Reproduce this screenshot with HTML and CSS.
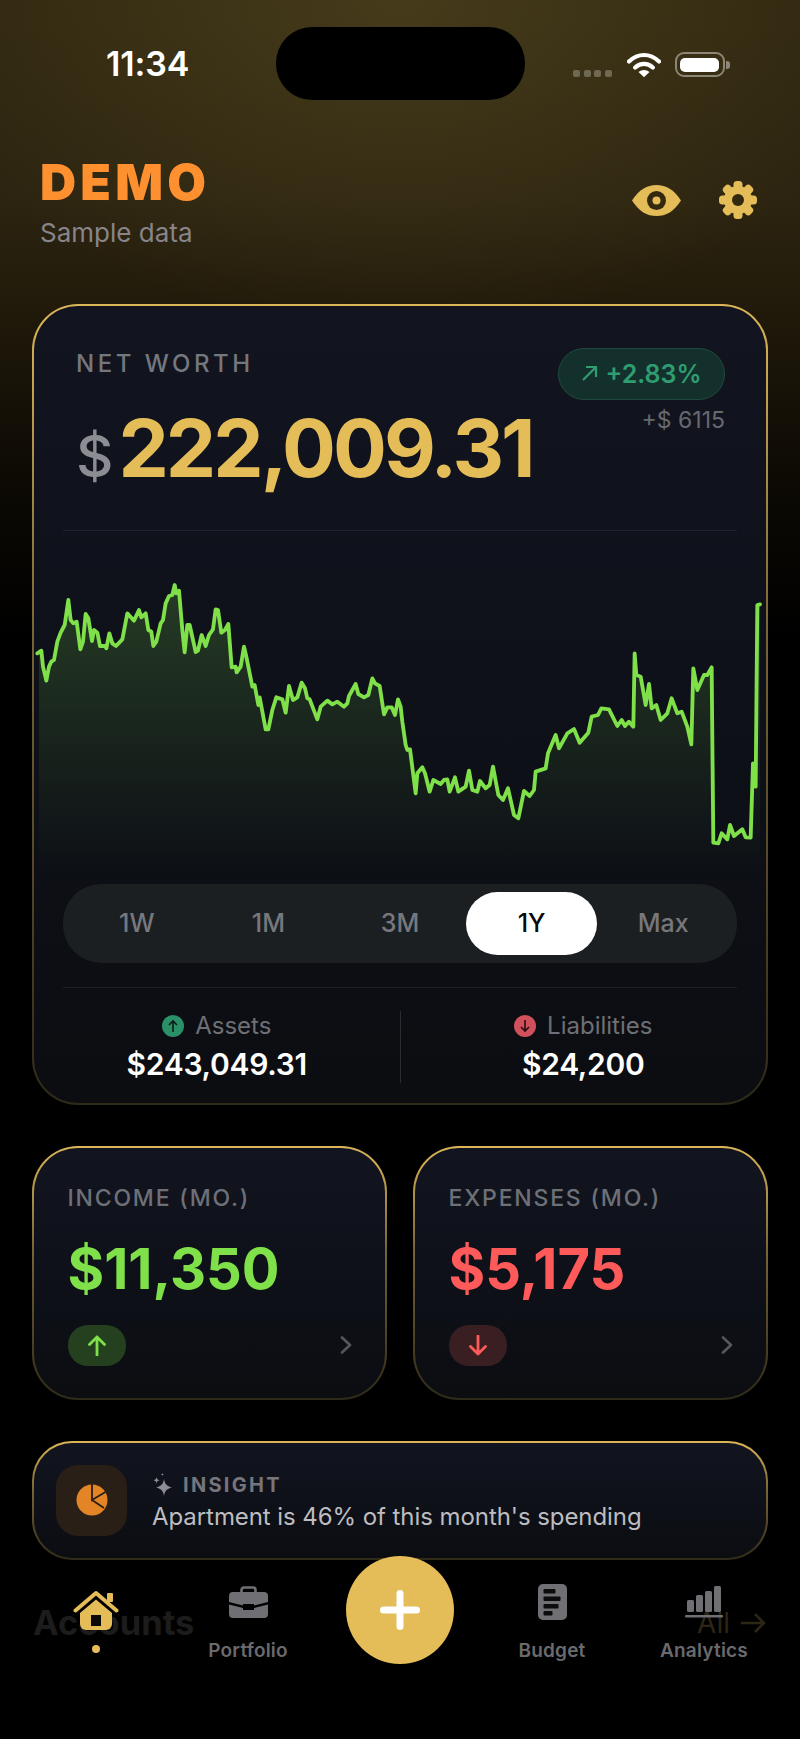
FILE: index.html
```html
<!DOCTYPE html>
<html lang="en">
<head>
<meta charset="utf-8">
<title>Demo</title>
<link rel="stylesheet" href="styles.css">
</head>
<body>
<div class="screen">
  <div class="status">
    <div class="time">11:34</div>
    <div class="island"></div>
    <div class="sys">
      <div class="dots"><i></i><i></i><i></i><i></i></div>
      <svg class="wifi" width="34" height="25" viewBox="0 0 34 25"><path d="M2 9.5C11 .8 23 .8 32 9.5M8.2 15.5c5.200-4.800 12.400-4.800 17.600 0" fill="none" stroke="#fff" stroke-width="4.200" stroke-linecap="round"/><path d="M11.500 20c3.200-2.800 7.800-2.800 11 0L17 25.200z" fill="#fff"/></svg>
      <div class="battery"><span></span></div>
      <div class="nub"></div>
    </div>
  </div>

  <header class="head">
    <div>
      <div class="brand">DEMO</div>
      <div class="sub">Sample data</div>
    </div>
    <div class="head-icons">
      <svg width="49" height="31" viewBox="0 0 49 31"><path d="M0 15.500C7 4.500 15 0 24.500 0S42 4.500 49 15.500C42 26.500 34 31 24.500 31S7 26.500 0 15.500z" fill="#e4bc58"/><circle cx="24.500" cy="15.500" r="9.500" fill="#33290f"/><circle cx="24.500" cy="15.500" r="4" fill="#e4bc58"/></svg>
      <svg width="38" height="38" viewBox="-19 -19 38 38"><g fill="#e4bc58"><circle r="14"/><rect x="-4.500" y="-19" width="9" height="38" rx="3.500"/><rect x="-4.500" y="-19" width="9" height="38" rx="3.500" transform="rotate(45)"/><rect x="-4.500" y="-19" width="9" height="38" rx="3.500" transform="rotate(90)"/><rect x="-4.500" y="-19" width="9" height="38" rx="3.500" transform="rotate(135)"/></g><circle r="6" fill="#33290f"/></svg>
    </div>
  </header>

  <section class="card worth">
    <div class="worth-top">
      <div>
        <div class="label-lg">NET WORTH</div>
        <div class="amount"><span class="cur">$</span><span class="big">222,009.31</span></div>
      </div>
      <div class="change">
        <div class="pill"><svg width="17" height="17" viewBox="0 0 17 17"><path d="M2 15L15 2M5 2h10v10" fill="none" stroke="#2f9d70" stroke-width="2.200"/></svg><span>+2.83%</span></div>
        <div class="delta">+$ 6115</div>
      </div>
    </div>
    <div class="rule"></div>
    <svg class="chart" width="731" height="342" viewBox="35 531 731 342">
      <defs>
        <linearGradient id="area" x1="0" y1="0" x2="0" y2="1">
          <stop offset="0" stop-color="#7fe04a" stop-opacity=".2"/>
          <stop offset=".45" stop-color="#7fe04a" stop-opacity=".11"/>
          <stop offset="1" stop-color="#7fe04a" stop-opacity="0"/>
        </linearGradient>
      </defs>
      <g transform="translate(20 560) scale(.33333)">
        <path fill="url(#area)" d="M60 285L67 272 72 320 82 362 90 320 97 305 105 300 115 245 125 218 137 195 148 120 155 180 163 190 173 185 184 268 192 245 200 162 208 175 219 243 225 210 235 218 243 258 258 258 262 265 271 220 280 250 291 258 310 238 325 160 345 182 360 150 367 172 380 160 388 210 397 215 403 258 412 245 425 190 432 180 440 130 450 108 460 105 467 75 472 100 480 92 490 210 497 277 505 195 512 195 530 276 537 272 548 225 560 258 570 225 582 208 590 148 597 150 607 218 618 210 628 192 638 322 650 320 653 337 665 320 675 260 682 290 700 380 707 375 718 435 722 412 740 508 748 508 760 450 772 412 790 418 800 458 810 378 822 420 835 412 848 368 858 385 865 415 872 418 895 478 905 440 925 422 940 433 955 425 975 440 985 430 990 408 1010 372 1018 402 1035 412 1048 405 1060 355 1068 370 1082 378 1095 463 1105 442 1118 442 1128 465 1137 418 1145 440 1150 485 1160 555 1165 570 1173 568 1190 700 1195 640 1210 622 1218 640 1232 695 1243 660 1265 672 1275 660 1285 658 1292 695 1308 652 1318 695 1340 680 1350 632 1360 690 1375 695 1383 663 1400 685 1412 675 1422 620 1438 705 1452 720 1467 685 1485 765 1498 775 1515 693 1532 708 1545 690 1550 635 1580 625 1587 580 1610 525 1620 565 1645 520 1665 507 1682 548 1708 518 1718 470 1737 465 1747 445 1770 448 1795 498 1808 480 1818 498 1830 485 1843 500 1847 280 1852 345 1865 350 1880 435 1890 372 1898 445 1912 435 1925 480 1945 460 1958 415 1975 460 1988 455 2005 500 2017 553 2023 325 2035 390 2055 345 2065 345 2078 322 2083 848 2098 850 2108 820 2125 838 2133 795 2145 828 2170 808 2180 832 2195 833 2202 610 2210 680 2215 135 2223 133V939H60z"/>
        <path fill="none" stroke="#7fe04a" stroke-width="11.500" stroke-linejoin="round" stroke-linecap="round" d="M55 280L67 272 72 320 82 362 90 320 97 305 105 300 115 245 125 218 137 195 148 120 155 180 163 190 173 185 184 268 192 245 200 162 208 175 219 243 225 210 235 218 243 258 258 258 262 265 271 220 280 250 291 258 310 238 325 160 345 182 360 150 367 172 380 160 388 210 397 215 403 258 412 245 425 190 432 180 440 130 450 108 460 105 467 75 472 100 480 92 490 210 497 277 505 195 512 195 530 276 537 272 548 225 560 258 570 225 582 208 590 148 597 150 607 218 618 210 628 192 638 322 650 320 653 337 665 320 675 260 682 290 700 380 707 375 718 435 722 412 740 508 748 508 760 450 772 412 790 418 800 458 810 378 822 420 835 412 848 368 858 385 865 415 872 418 895 478 905 440 925 422 940 433 955 425 975 440 985 430 990 408 1010 372 1018 402 1035 412 1048 405 1060 355 1068 370 1082 378 1095 463 1105 442 1118 442 1128 465 1137 418 1145 440 1150 485 1160 555 1165 570 1173 568 1190 700 1195 640 1210 622 1218 640 1232 695 1243 660 1265 672 1275 660 1285 658 1292 695 1308 652 1318 695 1340 680 1350 632 1360 690 1375 695 1383 663 1400 685 1412 675 1422 620 1438 705 1452 720 1467 685 1485 765 1498 775 1515 693 1532 708 1545 690 1550 635 1580 625 1587 580 1610 525 1620 565 1645 520 1665 507 1682 548 1708 518 1718 470 1737 465 1747 445 1770 448 1795 498 1808 480 1818 498 1830 485 1843 500 1847 280 1852 345 1865 350 1880 435 1890 372 1898 445 1912 435 1925 480 1945 460 1958 415 1975 460 1988 455 2005 500 2017 553 2023 325 2035 390 2055 345 2065 345 2078 322 2083 848 2098 850 2108 820 2125 838 2133 795 2145 828 2170 808 2180 832 2195 833 2202 610 2210 680 2215 135 2223 133"/>
      </g>
    </svg>
    <div class="seg">
      <div class="seg-item">1W</div>
      <div class="seg-item">1M</div>
      <div class="seg-item">3M</div>
      <div class="seg-item on">1Y</div>
      <div class="seg-item">Max</div>
    </div>
    <div class="rule rule-2"></div>
    <div class="split">
      <div class="split-cell">
        <div class="split-label"><span class="badge up"><svg width="12" height="14" viewBox="0 0 12 14"><path d="M6 13V2M2 6l4-4 4 4" fill="none" stroke="#0b1d16" stroke-width="1.600"/></svg></span>Assets</div>
        <div class="split-value">$243,049.31</div>
      </div>
      <div class="split-cell sep">
        <div class="split-label"><span class="badge down"><svg width="12" height="14" viewBox="0 0 12 14"><path d="M6 1v11M2 8l4 4 4-4" fill="none" stroke="#2a0d10" stroke-width="1.600"/></svg></span>Liabilities</div>
        <div class="split-value">$24,200</div>
      </div>
    </div>
  </section>

  <section class="duo">
    <div class="card mini">
      <div class="mini-label">INCOME (MO.)</div>
      <div class="mini-amount pos">$11,350</div>
      <div class="mini-foot">
        <span class="mini-pill pos-bg"><svg width="20" height="21" viewBox="0 0 20 21"><path d="M10 20V2M2.500 9.500L10 2l7.500 7.500" fill="none" stroke="#7fe04a" stroke-width="2.800" stroke-linecap="round" stroke-linejoin="round"/></svg></span>
        <svg class="chev" width="12" height="18" viewBox="0 0 12 18"><path d="M2 1.500L10 9l-8 7.500" fill="none" stroke="#55575c" stroke-width="2.600" stroke-linecap="round" stroke-linejoin="round"/></svg>
      </div>
    </div>
    <div class="card mini">
      <div class="mini-label">EXPENSES (MO.)</div>
      <div class="mini-amount neg">$5,175</div>
      <div class="mini-foot">
        <span class="mini-pill neg-bg"><svg width="20" height="21" viewBox="0 0 20 21"><path d="M10 1v18M2.500 11.500L10 19l7.500-7.500" fill="none" stroke="#ff5a5a" stroke-width="2.800" stroke-linecap="round" stroke-linejoin="round"/></svg></span>
        <svg class="chev" width="12" height="18" viewBox="0 0 12 18"><path d="M2 1.500L10 9l-8 7.500" fill="none" stroke="#55575c" stroke-width="2.600" stroke-linecap="round" stroke-linejoin="round"/></svg>
      </div>
    </div>
  </section>

  <section class="card insight">
    <div class="insight-icon">
      <svg width="32" height="32" viewBox="0 0 32 32"><circle cx="16" cy="16" r="15.500" fill="#e38527"/><path d="M16 0v16l13.500-8M16 16l12 8" fill="none" stroke="#2a1f17" stroke-width="1.800"/></svg>
    </div>
    <div class="insight-body">
      <div class="insight-title"><svg width="20" height="23" viewBox="0 0 20 23"><g fill="#8d8d93"><path d="M12 6c.8 5 2.600 7 8 8.500-5.400 1.300-7.200 3.400-8 8.500-.8-5.100-2.600-7.200-8-8.500 5.400-1.500 7.200-3.500 8-8.500z"/><path d="M4.500 4c.3 2 1 2.800 3 3.300-2 .5-2.700 1.300-3 3.200-.3-1.900-1-2.700-3-3.200 2-.5 2.700-1.300 3-3.300z"/><path d="M10.500 0c.1.900.5 1.300 1.500 1.500-1 .2-1.400.6-1.500 1.500-.1-.9-.5-1.300-1.500-1.500 1-.2 1.400-.6 1.500-1.500z"/></g></svg><span>INSIGHT</span></div>
      <div class="insight-text">Apartment is 46% of this month's spending</div>
    </div>
  </section>

  <section class="accounts">
    <div class="accounts-title">Accounts</div>
    <div class="accounts-all">All <svg width="26" height="22" viewBox="0 0 26 22"><path d="M1 11h23M15 2l9 9-9 9" fill="none" stroke="#2c2615" stroke-width="2.600"/></svg></div>
  </section>

  <nav class="tabs">
    <div class="tab">
      <div class="tab-icon"><svg class="i-home" width="46" height="40" viewBox="0 0 46 40"><g fill="#e4bc58"><rect x="34" y="3" width="6" height="9" rx="1"/><path d="M7 23L23 9.500 39 23v11a6 6 0 0 1-6 6H13a6 6 0 0 1-6-6z"/></g><path d="M2.500 20.500L23 3l20.500 17.500" fill="none" stroke="#e4bc58" stroke-width="4" stroke-linecap="round" stroke-linejoin="round"/><rect x="18" y="25" width="10" height="11" fill="#0a0a08"/></svg></div>
      <div class="tab-dot"></div>
    </div>
    <div class="tab">
      <div class="tab-icon"><svg class="i-two" width="39" height="32" viewBox="0 0 39 32"><path d="M12.500 7V4a2.500 2.500 0 0 1 2.500-2.500h9A2.500 2.500 0 0 1 26.500 4v3" fill="none" stroke="#6f6f74" stroke-width="2.600"/><path d="M4 6h31a4 4 0 0 1 4 4v6l-14 3.500v-1.500H14v1.500L0 16v-6a4 4 0 0 1 4-4z" fill="#6f6f74"/><path d="M0 18.500l14 3.500v2h11v-2l14-3.500V28a4 4 0 0 1-4 4H4a4 4 0 0 1-4-4z" fill="#6f6f74"/></svg></div>
      <div class="tab-label">Portfolio</div>
    </div>
    <div class="tab tab-fab">
      <div class="fab"><svg width="40" height="40" viewBox="0 0 40 40"><path d="M20 3.500v33M3.500 20h33" stroke="#fff" stroke-width="7" stroke-linecap="round"/></svg></div>
    </div>
    <div class="tab">
      <div class="tab-icon"><svg width="29" height="36" viewBox="0 0 29 36"><rect width="29" height="36" rx="5" fill="#6f6f74"/><g fill="#0c0c0c"><rect x="5.500" y="5" width="12" height="4.500" rx="1"/><rect x="5.500" y="12.500" width="17" height="4.500" rx="1"/><rect x="5.500" y="20" width="15" height="4.500" rx="1"/><rect x="5.500" y="27" width="9" height="4.500" rx="1"/></g></svg></div>
      <div class="tab-label">Budget</div>
    </div>
    <div class="tab">
      <div class="tab-icon"><svg class="i-two" width="38" height="32" viewBox="0 0 38 32"><g fill="#6f6f74"><rect x="2" y="14" width="7" height="12" rx="1.500"/><rect x="11" y="9" width="7" height="17" rx="1.500"/><rect x="20" y="5" width="7" height="21" rx="1.500"/><rect x="29" y="0" width="7" height="26" rx="1.500"/><rect y="29" width="38" height="2.600" rx="1"/></g></svg></div>
      <div class="tab-label">Analytics</div>
    </div>
  </nav>
</div>
</body>
</html>
```

FILE: styles.css
```css
* { box-sizing: border-box; }
html, body { margin: 0; background: #000; }
body { font-family: Inter, "Noto Sans", sans-serif; }

.screen {
  position: relative;
  width: 800px;
  height: 1739px;
  overflow: hidden;
  padding: 27px 32px 0;
  background:
    radial-gradient(ellipse 500px 330px at 400px 0, rgba(92, 78, 36, .5), rgba(92, 78, 36, 0)),
    linear-gradient(#2f2710 0, #2c2410 200px, #221b0b 300px, #0d0a04 480px, #000 640px);
}

/* status bar */
.status { display: grid; grid-template-columns: 243.5px 249px 1fr; height: 73px; }
.time { padding: 19px 0 0 74px; font-size: 34px; line-height: 36px; font-weight: 600; color: #fff; letter-spacing: -.1px; }
.island { background: #000; border-radius: 36px; }
.sys { display: flex; align-items: flex-start; padding: 25px 0 0 48.500px; }
.dots { display: flex; gap: 3.500px; margin-top: 18px; }
.dots i { display: block; width: 7px; height: 7px; border-radius: 2px; background: #6f6852; }
.wifi { margin-left: 15px; }
.battery { margin-left: 14px; width: 50px; height: 25px; padding: 3.500px; border: 2.500px solid #8b8675; border-radius: 9px; }
.battery span { display: block; height: 100%; background: #fff; border-radius: 5px; }
.nub { width: 3.500px; height: 8px; margin: 8.500px 0 0 1.500px; border-radius: 0 3px 3px 0; background: #8b8675; }

/* header */
.head { display: flex; justify-content: space-between; align-items: flex-start; padding: 0 11px 0 8px; margin-top: 52px; height: 152px; }
.brand { font-size: 50px; line-height: 60px; font-weight: 900; letter-spacing: 4.200px; color: #ff9030; }
.sub { font-size: 26px; line-height: 32px; margin-top: 5px; color: #87858a; }
.head-icons { display: flex; align-items: center; gap: 38px; margin-top: 29px; }

/* cards */
.card {
  border: 2.500px solid transparent;
  background:
    linear-gradient(#12151f 0, #0f121b 35%, #0b0d11 100%) padding-box,
    linear-gradient(#dcb658 0, #7a6636 40%, #2e2a18 100%) border-box;
}
.worth { border-radius: 46px; }
.worth-top { display: flex; justify-content: space-between; padding: 41.500px 41px 41px 42px; }
.label-lg { font-size: 24px; line-height: 30px; margin-top: 1px; font-weight: 500; letter-spacing: 3.500px; color: #75777f; }
.amount { display: flex; align-items: baseline; margin-top: 27px; height: 83px; line-height: 84px; }
.cur { font-size: 58px; font-weight: 500; color: #8b8d93; margin-right: 5px; }
.big { font-size: 80px; font-weight: 700; letter-spacing: -3px; color: #e4bc58; }
.change { display: flex; flex-direction: column; align-items: flex-end; }
.pill { display: flex; align-items: center; justify-content: center; gap: 7px; width: 167px; height: 52px; border: 1.500px solid #1f4a3b; border-radius: 26px; background: #14302c; font-size: 25px; font-weight: 600; color: #2f9d70; }
.delta { margin-top: 7px; font-size: 23px; line-height: 26px; color: #66696f; }
.rule { height: 1px; margin: 0 29px; background: #20232b; }
.rule-2 { margin-top: 24px; background: #1c1e22; }
.chart { display: block; }

.seg { display: grid; grid-template-columns: repeat(5, 1fr); height: 79px; margin: 11px 29px 0; padding: 8px; border-radius: 38px; background: #1c1f22; }
.seg-item { display: flex; align-items: center; justify-content: center; border-radius: 32px; font-size: 25px; font-weight: 500; color: #76787d; }
.seg-item.on { background: #fff; color: #0a0a0a; }

.split { display: flex; padding: 23px 0 20px; }
.split-cell { flex: 1; display: flex; flex-direction: column; align-items: center; height: 72px; }
.split-cell.sep { border-left: 1px solid #2a2c30; }
.split-label { display: flex; align-items: center; gap: 11px; height: 30px; font-size: 24px; color: #6e7075; }
.badge { display: flex; align-items: center; justify-content: center; width: 22px; height: 22px; border-radius: 50%; }
.up { background: #2a9068; }
.down { background: #d0515c; }
.split-value { margin-top: 4px; font-size: 30px; line-height: 38px; font-weight: 600; letter-spacing: -.3px; color: #fff; }

/* income / expenses */
.duo { display: grid; grid-template-columns: 1fr 1fr; gap: 26px; margin-top: 41px; }
.mini { height: 254px; padding: 36px 33px 0 33.500px; border-radius: 46px; }
.mini-label { font-size: 23px; line-height: 28px; font-weight: 500; letter-spacing: 1.800px; color: #6e7078; }
.mini-amount { margin-top: 27px; font-size: 56px; line-height: 60px; font-weight: 700; }
.pos { color: #7fe04a; }
.neg { color: #ff5a5a; }
.mini-foot { display: flex; align-items: center; justify-content: space-between; margin-top: 26px; }
.mini-pill { display: flex; align-items: center; justify-content: center; width: 58px; height: 41px; border-radius: 20px; }
.pos-bg { background: #24401f; }
.neg-bg { background: #3a1f22; }

/* insight */
.insight { display: flex; align-items: flex-start; gap: 25px; height: 119px; margin-top: 41px; padding: 22px 0 0 22px; border-radius: 40px; }
.insight-icon { display: flex; align-items: center; justify-content: center; width: 71px; height: 71px; border-radius: 22px; background: #2a1f17; }
.insight-body { padding-top: 7px; }
.insight-title { display: flex; align-items: center; gap: 11px; height: 26px; font-size: 20px; font-weight: 700; letter-spacing: 2.300px; color: #75757b; }
.insight-text { margin-top: 3px; font-size: 24px; line-height: 32px; letter-spacing: -.07px; color: #bdbdc0; }

/* section behind the tab bar */
.accounts { display: flex; justify-content: space-between; align-items: center; margin-top: 43px; height: 40px; padding-left: 1px; }
.accounts-title { font-size: 34.500px; font-weight: 700; color: #1c1c1c; }
.accounts-all { display: flex; align-items: center; gap: 10px; font-size: 28px; color: #2c2615; padding-right: 2px; }

/* tab bar */
.tabs { position: absolute; left: 20px; right: 20px; top: 1584px; display: grid; grid-template-columns: repeat(5, 152px); }
.tab { display: flex; flex-direction: column; align-items: center; }
.tab-icon { display: flex; justify-content: center; align-items: flex-start; height: 54.500px; }
.i-home { margin-top: 6px; }
.i-two { margin-top: 2px; }
.tab-label { font-size: 19px; line-height: 24px; font-weight: 600; color: #6a6a6e; letter-spacing: .2px; }
.tab-dot { width: 8px; height: 8px; margin-top: 6.500px; border-radius: 50%; background: #e4bc58; }
.fab { display: flex; align-items: center; justify-content: center; width: 108px; height: 108px; margin-top: -28px; border-radius: 50%; background: #e4bc58; }
```
